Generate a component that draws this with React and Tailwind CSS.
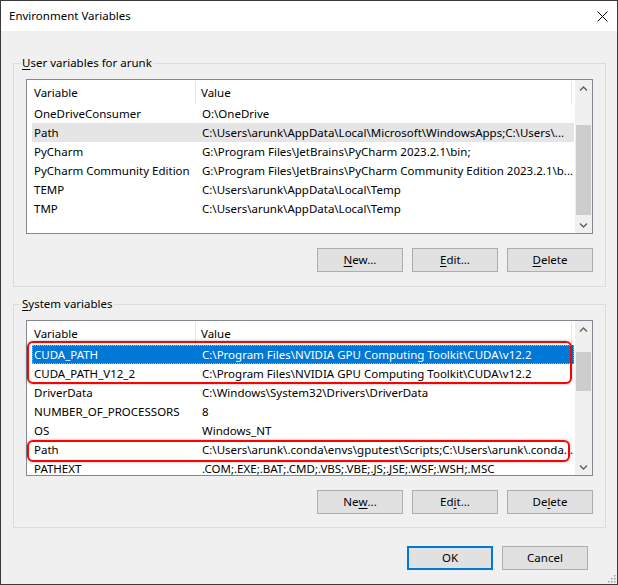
import React from "react";

const FONT = { fontFamily: '"Noto Sans", "Liberation Sans", sans-serif' };

const userVars = [
  ["OneDriveConsumer", "O:\\OneDrive"],
  ["Path", "C:\\Users\\arunk\\AppData\\Local\\Microsoft\\WindowsApps;C:\\Users\\..."],
  ["PyCharm", "G:\\Program Files\\JetBrains\\PyCharm 2023.2.1\\bin;"],
  ["PyCharm Community Edition", "G:\\Program Files\\JetBrains\\PyCharm Community Edition 2023.2.1\\b..."],
  ["TEMP", "C:\\Users\\arunk\\AppData\\Local\\Temp"],
  ["TMP", "C:\\Users\\arunk\\AppData\\Local\\Temp"],
];

const sysVars = [
  ["CUDA_PATH", "C:\\Program Files\\NVIDIA GPU Computing Toolkit\\CUDA\\v12.2"],
  ["CUDA_PATH_V12_2", "C:\\Program Files\\NVIDIA GPU Computing Toolkit\\CUDA\\v12.2"],
  ["DriverData", "C:\\Windows\\System32\\Drivers\\DriverData"],
  ["NUMBER_OF_PROCESSORS", "8"],
  ["OS", "Windows_NT"],
  ["Path", "C:\\Users\\arunk\\.conda\\envs\\gputest\\Scripts;C:\\Users\\arunk\\.conda..."],
  ["PATHEXT", ".COM;.EXE;.BAT;.CMD;.VBS;.VBE;.JS;.JSE;.WSF;.WSH;.MSC"],
];

function Chevron({ down }) {
  return (
    <svg width="9" height="6" viewBox="0 0 9 6">
      <path
        d={down ? "M1 1.5 L4.5 5 L8 1.5" : "M1 4.5 L4.5 1 L8 4.5"}
        fill="none"
        stroke="#606060"
        strokeWidth="1.4"
      />
    </svg>
  );
}

function ScrollBar({ spaceBefore, thumb }) {
  return (
    <div className="w-[17px] bg-[#f0f0f0] flex flex-col shrink-0">
      <div className="h-[17px] flex items-center justify-center">
        <Chevron />
      </div>
      <div className="flex-1 flex flex-col px-[1px]">
        <div style={{ height: spaceBefore }} />
        <div className="bg-[#cdcdcd] w-[15px]" style={{ height: thumb }} />
      </div>
      <div className="h-[17px] flex items-center justify-center">
        <Chevron down />
      </div>
    </div>
  );
}

function Row({ name, value, state }) {
  let cls = "text-black";
  if (state === "hover") cls = "bg-[#e5e5e5] text-black";
  if (state === "selected")
    cls = "bg-[#0078d7] text-white outline outline-1 outline-dotted outline-[#f3a34a] -outline-offset-1";
  return (
    <div className={`ml-[5px] mr-[1px] h-[19px] flex items-center shrink-0 whitespace-nowrap ${cls}`}>
      <div className="w-[168px] pl-[2px] shrink-0 overflow-hidden">{name}</div>
      <div className="pl-[2px]">{value}</div>
    </div>
  );
}

function ListView({ rows, height, states, spaceBefore, thumb, children }) {
  return (
    <div
      className="relative ml-[12px] w-[567px] border border-[#828790] bg-white flex"
      style={{ height }}
    >
      <div className="flex-1 flex flex-col overflow-hidden">
        <div className="h-[24px] flex items-center shrink-0 text-black pt-[1px]">
          <div className="w-[169px] pl-[7px] shrink-0 h-full flex items-center border-r border-[#e5e5e5]">
            Variable
          </div>
          <div className="w-[376px] pl-[5px] h-full flex items-center border-r border-[#e5e5e5]">
            Value
          </div>
        </div>
        {rows.map(([n, v], i) => (
          <Row key={i} name={n} value={v} state={states[i]} />
        ))}
      </div>
      <ScrollBar spaceBefore={spaceBefore} thumb={thumb} />
      {children}
    </div>
  );
}

function Btn({ children, w = 86, primary }) {
  return (
    <div
      className={`h-[24px] flex items-center justify-center text-black ${
        primary ? "border-2 border-[#0078d7] bg-[#e1e1e1]" : "border border-[#adadad] bg-[#e1e1e1]"
      }`}
      style={{ width: w }}
    >
      {children}
    </div>
  );
}

function U({ children }) {
  return <span className="underline underline-offset-[2px] decoration-1">{children}</span>;
}

function Group({ legend, children, mt }) {
  return (
    <fieldset
      className="w-[593px] ml-[12px] border border-[#dcdcdc] p-0 m-0"
      style={{ marginTop: mt }}
    >
      <legend className="ml-[7px] px-[1px] leading-[16px] text-black">{legend}</legend>
      {children}
    </fieldset>
  );
}

export default function App() {
  return (
    <div
      className="w-[618px] h-[585px] border border-[#3a3a3a] bg-[#f0f0f0] flex flex-col text-[11.5px] relative overflow-hidden"
      style={FONT}
    >
      {/* Title bar */}
      <div className="h-[30px] bg-white flex items-center justify-between pl-[8px] pr-[8px] shrink-0">
        <span className="text-black">Environment Variables</span>
        <svg width="11" height="11" viewBox="0 0 11 11" className="mr-[1px]">
          <path d="M0.5 0.5 L10.5 10.5 M10.5 0.5 L0.5 10.5" stroke="#000" strokeWidth="1" />
        </svg>
      </div>

      {/* User variables */}
      <Group
        mt={24}
        legend={
          <>
            <U>U</U>ser variables for arunk
          </>
        }
      >
        <div className="h-[8px]" />
        <ListView
          rows={userVars}
          height={155}
          states={[null, "hover"]}
          spaceBefore={28}
          thumb={90}
        />
        <div className="flex justify-end gap-[9px] mr-[12px] mt-[14px] mb-[14px]">
          <Btn>
            <U>N</U>ew...
          </Btn>
          <Btn>
            <U>E</U>dit...
          </Btn>
          <Btn>
            <U>D</U>elete
          </Btn>
        </div>
      </Group>

      {/* System variables */}
      <Group
        mt={9}
        legend={
          <>
            <U>S</U>ystem variables
          </>
        }
      >
        <div className="h-[8px]" />
        <ListView
          rows={sysVars}
          height={156}
          states={["selected"]}
          spaceBefore={14}
          thumb={39}
        >
          <div className="absolute left-[0px] top-[20px] w-[545px] h-[43px] border-2 border-[#ff0000] rounded-[6px] shadow-[0_0_3px_rgba(0,0,0,0.35)] pointer-events-none" />
          <div className="absolute left-[0px] top-[119px] w-[543px] h-[22px] border-2 border-[#ff0000] rounded-[6px] shadow-[0_0_3px_rgba(0,0,0,0.35)] pointer-events-none" />
        </ListView>
        <div className="flex justify-end gap-[9px] mr-[12px] mt-[14px] mb-[13px]">
          <Btn>
            Ne<U>w</U>...
          </Btn>
          <Btn>
            Ed<U>i</U>t...
          </Btn>
          <Btn>
            De<U>l</U>ete
          </Btn>
        </div>
      </Group>

      {/* Dialog buttons */}
      <div className="flex justify-end gap-[9px] pr-[29px] mt-[18px]">
        <Btn w={86} primary>
          OK
        </Btn>
        <Btn w={86}>Cancel</Btn>
      </div>

      {/* Resize grip */}
      <svg width="10" height="10" viewBox="0 0 10 10" className="absolute right-[1px] bottom-[1px]">
        {[
          [8, 2],
          [5, 5],
          [8, 5],
          [2, 8],
          [5, 8],
          [8, 8],
        ].map(([x, y], i) => (
          <rect key={i} x={x} y={y} width="1.5" height="1.5" fill="#a0a0a0" />
        ))}
      </svg>
    </div>
  );
}
